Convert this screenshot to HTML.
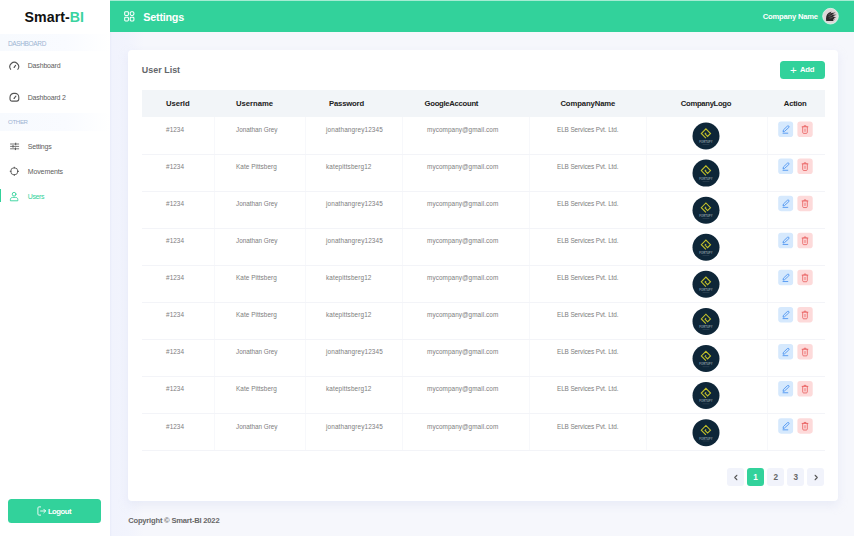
<!DOCTYPE html><html lang="en"><head><meta charset="utf-8"><title>Smart-BI Users</title><style>
*{margin:0;padding:0;box-sizing:border-box}
html,body{width:854px;height:539px;overflow:hidden;background:#fff}
body{position:relative;font-family:"Liberation Sans",sans-serif;color:#666}
.abs{position:absolute}
.t{position:absolute;white-space:nowrap;line-height:1}
#side{left:0;top:0;width:110px;height:539px;background:#fff}
.band{left:0;width:110px;background:linear-gradient(90deg,#f7fafe 0%,#f9fbff 60%,#ffffff 100%)}
#main{left:110px;top:0;width:744px;height:535.6px;background:linear-gradient(90deg,#e9ecfa 0,#f1f3fd 2px,#f2f4fd 18px,#f6f7fc 34px)}
#hdr{left:110px;top:0;width:744px;height:31.6px;background:#32d29b;border-top:1px solid #a6ecd3}
#card{left:128px;top:50.3px;width:710.3px;height:451px;background:#fff;border-radius:4px;box-shadow:0 4px 10px rgba(205,212,238,.35)}
#thead{left:141.5px;top:90px;width:683px;height:27px;background:#f2f5f8}
.hl{left:141.5px;width:683px;height:1px;background:#f3f4f8}
.vl{top:117px;width:1px;height:334px;background:#f7f8fb}
.logo{width:27.2px;height:27.2px;border-radius:50%;background:#0e2638;left:692.4px}
.eb{width:15px;height:15.5px;border-radius:3px;background:#d6e9fd;left:778.1px}
.db{width:15.4px;height:15.5px;border-radius:3px;background:#fddada;left:797.3px}
.pg{top:468.1px;width:17px;height:17.5px;border-radius:3px;background:#f1f3fb}
</style></head><body>
<div id="main" class="abs"></div>
<div id="hdr" class="abs"></div>
<div id="side" class="abs"></div>
<div class="abs band" style="top:33.7px;height:17.3px"></div>
<div class="abs band" style="top:112.5px;height:18.5px"></div>
<div class="t" style="left:24.60px;top:10.08px;font-size:14.2px;color:#111;font-weight:bold;letter-spacing:0.028px;">Smart-<span style="color:#3ad3a0">BI</span></div>
<div class="t" style="left:7.90px;top:40.90px;font-size:6.5px;color:#9db4d2;letter-spacing:-0.342px;">DASHBOARD</div>
<div class="t" style="left:8.10px;top:119.24px;font-size:6.1px;color:#9db4d2;letter-spacing:-0.350px;">OTHER</div>
<div class="t" style="left:27.70px;top:62.37px;font-size:7.0px;color:#5c5c5c;letter-spacing:-0.161px;">Dashboard</div>
<div class="t" style="left:27.70px;top:94.17px;font-size:7.0px;color:#5c5c5c;letter-spacing:-0.189px;">Dashboard 2</div>
<div class="t" style="left:27.70px;top:143.27px;font-size:7.0px;color:#5c5c5c;letter-spacing:-0.187px;">Settings</div>
<div class="t" style="left:27.70px;top:168.37px;font-size:7.0px;color:#5c5c5c;letter-spacing:-0.098px;">Movements</div>
<div class="t" style="left:27.70px;top:193.27px;font-size:7.0px;color:#32d29b;letter-spacing:-0.356px;">Users</div>
<div class="abs" style="left:0;top:189.2px;width:1.1px;height:12.6px;background:#32d29b"></div>
<svg class="abs" style="left:9px;top:60.5px" width="11" height="11" viewBox="0 0 11 11" fill="none" stroke="#555" stroke-width="1.1" stroke-linecap="round"><path d="M1.65 8.3A4.4 4.4 0 1 1 8.85 8.3"/><path d="M5.3 6.1L6.6 4.4"/><circle cx="5.15" cy="6.3" r="0.6" fill="#555" stroke="none"/></svg>
<svg class="abs" style="left:9px;top:91.5px" width="11" height="11" viewBox="0 0 11 11" fill="none" stroke="#555" stroke-width="1.1" stroke-linecap="round"><path d="M3 9.1H7.8A2 2 0 0 0 9.8 7.1V5.2A3.8 3.8 0 0 0 6 1.4H4.8A3.8 3.8 0 0 0 1 5.2V7.1A2 2 0 0 0 3 9.1Z"/><path d="M5.3 6.2L6.9 4.1"/><circle cx="5.15" cy="6.4" r="0.6" fill="#555" stroke="none"/></svg>
<svg class="abs" style="left:9px;top:141px" width="11" height="11" viewBox="0 0 11 11" fill="none" stroke="#555" stroke-width="0.8" stroke-linecap="round"><path d="M1.5 3H9.7M1.5 5.4H9.7M1.5 7.8H9.7"/><path d="M6.7 2.1V3.9M4 4.5V6.3M6.4 6.9V8.7" stroke-width="1"/></svg>
<svg class="abs" style="left:9px;top:166px" width="11" height="11" viewBox="0 0 11 11" fill="none" stroke="#555" stroke-width="0.85" stroke-linecap="round"><circle cx="5.3" cy="5.3" r="3.6"/><path d="M5.3 1.2V2.2M5.3 8.4V9.4M1.2 5.3H2.2M8.4 5.3H9.4" stroke-width="1"/></svg>
<svg class="abs" style="left:9px;top:191px" width="11" height="11" viewBox="0 0 11 11" fill="none" stroke="#32d29b" stroke-width="0.9" stroke-linecap="round" stroke-linejoin="round"><circle cx="5.1" cy="3.2" r="1.85"/><path d="M1.4 9.4V8.5C1.4 7.2 2.4 6.4 3.6 6.4H6.6C7.8 6.4 8.8 7.2 8.8 8.5V9.4Z"/></svg>
<div class="abs" style="left:7.5px;top:498.8px;width:93.7px;height:24.2px;border-radius:3.5px;background:#32d29b"></div>
<div class="t" style="left:47.90px;top:507.68px;font-size:7.7px;color:#fff;font-weight:bold;letter-spacing:-0.480px;">Logout</div>
<svg class="abs" style="left:36.5px;top:506px" width="10" height="10" viewBox="0 0 10 10" fill="none" stroke="#fff" stroke-width="0.9" stroke-linecap="round" stroke-linejoin="round"><path d="M3.6 0.9H1.9C1.3 0.9 0.9 1.3 0.9 1.9V8.1C0.9 8.7 1.3 9.1 1.9 9.1H3.6"/><path d="M3.6 5H8.6M6.8 3.2L8.6 5L6.8 6.8"/></svg>
<svg class="abs" style="left:123.5px;top:11px" width="11" height="11" viewBox="0 0 11 11" fill="none" stroke="#fff" stroke-width="1.05"><rect x="0.7" y="0.7" width="3.7" height="3.7" rx="0.8"/><rect x="6.2" y="0.7" width="3.7" height="3.7" rx="1.3"/><rect x="0.7" y="6.2" width="3.7" height="3.7" rx="0.8"/><rect x="6.2" y="6.2" width="3.7" height="3.7" rx="0.8"/></svg>
<div class="t" style="left:143.30px;top:12.06px;font-size:10.8px;color:#fff;font-weight:bold;letter-spacing:-0.238px;">Settings</div>
<div class="t" style="left:762.80px;top:12.97px;font-size:7.6px;color:#fff;font-weight:bold;letter-spacing:-0.203px;">Company Name</div>
<svg class="abs" style="left:0;top:0" width="854" height="32" viewBox="0 0 854 32"><g transform="translate(821.9,7.6) scale(0.86)"><circle cx="10" cy="10" r="9.1" fill="#ddd6d8" stroke="#e6f8f0" stroke-width="0.9"/><path d="M5 15.6C4.4 12 5 8 8 6L11.2 4.4L10.2 6.3L16 5.6L11.6 8L17 8.4L12.6 10L16.6 11.4L13.6 12L15.2 13.6L12.8 13.7L13.6 15.6Z" fill="#2a2628"/><path d="M7.4 8.4L11 6.6M7.8 10.4L12 8.9M8.8 12.4L12.6 11.3" stroke="#8d8789" stroke-width="0.6" fill="none"/></g></svg>
<div id="card" class="abs"></div>
<div class="t" style="left:141.80px;top:66.17px;font-size:8.9px;color:#63666b;font-weight:bold;letter-spacing:0.035px;">User List</div>
<div class="abs" style="left:780.1px;top:61px;width:44.6px;height:17.6px;border-radius:3.5px;background:#32d29b"></div>
<div class="t" style="left:789.90px;top:64.77px;font-size:11.5px;color:#fff;">+</div>
<div class="t" style="left:800.10px;top:66.48px;font-size:7.7px;color:#fff;font-weight:bold;letter-spacing:-0.289px;">Add</div>
<div id="thead" class="abs"></div>
<div class="t" style="left:166.00px;top:99.88px;font-size:7.7px;color:#222;font-weight:bold;letter-spacing:-0.061px;">UserId</div>
<div class="t" style="left:236.00px;top:99.88px;font-size:7.7px;color:#222;font-weight:bold;letter-spacing:-0.030px;">Username</div>
<div class="t" style="left:329.00px;top:99.88px;font-size:7.7px;color:#222;font-weight:bold;letter-spacing:-0.172px;">Password</div>
<div class="t" style="left:424.60px;top:99.88px;font-size:7.7px;color:#222;font-weight:bold;letter-spacing:-0.286px;">GoogleAccount</div>
<div class="t" style="left:560.40px;top:99.88px;font-size:7.7px;color:#222;font-weight:bold;letter-spacing:-0.105px;">CompanyName</div>
<div class="t" style="left:680.80px;top:99.88px;font-size:7.7px;color:#222;font-weight:bold;letter-spacing:-0.318px;">CompanyLogo</div>
<div class="t" style="left:783.80px;top:99.88px;font-size:7.7px;color:#222;font-weight:bold;letter-spacing:-0.209px;">Action</div>
<div class="abs vl" style="left:214.3px"></div>
<div class="abs vl" style="left:305px"></div>
<div class="abs vl" style="left:402px"></div>
<div class="abs vl" style="left:529px"></div>
<div class="abs vl" style="left:646.2px"></div>
<div class="abs vl" style="left:766.5px"></div>
<div class="abs hl" style="top:153.5px"></div>
<div class="t" style="left:166.10px;top:126.88px;font-size:6.4px;color:#7e7e7e;letter-spacing:0.021px;">#1234</div>
<div class="t" style="left:236.00px;top:126.88px;font-size:6.4px;color:#7e7e7e;letter-spacing:-0.037px;">Jonathan Grey</div>
<div class="t" style="left:326.00px;top:126.88px;font-size:6.4px;color:#7e7e7e;letter-spacing:0.129px;">jonathangrey12345</div>
<div class="t" style="left:427.00px;top:126.88px;font-size:6.4px;color:#7e7e7e;letter-spacing:0.065px;">mycompany@gmail.com</div>
<div class="t" style="left:557.00px;top:126.88px;font-size:6.4px;color:#7e7e7e;letter-spacing:-0.099px;">ELB Services Pvt. Ltd.</div>
<div class="abs hl" style="top:190.6px"></div>
<div class="t" style="left:166.10px;top:163.96px;font-size:6.4px;color:#7e7e7e;letter-spacing:0.021px;">#1234</div>
<div class="t" style="left:236.00px;top:163.96px;font-size:6.4px;color:#7e7e7e;letter-spacing:0.043px;">Kate Pittsberg</div>
<div class="t" style="left:326.00px;top:163.96px;font-size:6.4px;color:#7e7e7e;letter-spacing:0.122px;">katepittsberg12</div>
<div class="t" style="left:427.00px;top:163.96px;font-size:6.4px;color:#7e7e7e;letter-spacing:0.065px;">mycompany@gmail.com</div>
<div class="t" style="left:557.00px;top:163.96px;font-size:6.4px;color:#7e7e7e;letter-spacing:-0.099px;">ELB Services Pvt. Ltd.</div>
<div class="abs hl" style="top:227.6px"></div>
<div class="t" style="left:166.10px;top:201.04px;font-size:6.4px;color:#7e7e7e;letter-spacing:0.021px;">#1234</div>
<div class="t" style="left:236.00px;top:201.04px;font-size:6.4px;color:#7e7e7e;letter-spacing:-0.037px;">Jonathan Grey</div>
<div class="t" style="left:326.00px;top:201.04px;font-size:6.4px;color:#7e7e7e;letter-spacing:0.129px;">jonathangrey12345</div>
<div class="t" style="left:427.00px;top:201.04px;font-size:6.4px;color:#7e7e7e;letter-spacing:0.065px;">mycompany@gmail.com</div>
<div class="t" style="left:557.00px;top:201.04px;font-size:6.4px;color:#7e7e7e;letter-spacing:-0.099px;">ELB Services Pvt. Ltd.</div>
<div class="abs hl" style="top:264.7px"></div>
<div class="t" style="left:166.10px;top:238.12px;font-size:6.4px;color:#7e7e7e;letter-spacing:0.021px;">#1234</div>
<div class="t" style="left:236.00px;top:238.12px;font-size:6.4px;color:#7e7e7e;letter-spacing:-0.037px;">Jonathan Grey</div>
<div class="t" style="left:326.00px;top:238.12px;font-size:6.4px;color:#7e7e7e;letter-spacing:0.129px;">jonathangrey12345</div>
<div class="t" style="left:427.00px;top:238.12px;font-size:6.4px;color:#7e7e7e;letter-spacing:0.065px;">mycompany@gmail.com</div>
<div class="t" style="left:557.00px;top:238.12px;font-size:6.4px;color:#7e7e7e;letter-spacing:-0.099px;">ELB Services Pvt. Ltd.</div>
<div class="abs hl" style="top:301.8px"></div>
<div class="t" style="left:166.10px;top:275.20px;font-size:6.4px;color:#7e7e7e;letter-spacing:0.021px;">#1234</div>
<div class="t" style="left:236.00px;top:275.20px;font-size:6.4px;color:#7e7e7e;letter-spacing:0.043px;">Kate Pittsberg</div>
<div class="t" style="left:326.00px;top:275.20px;font-size:6.4px;color:#7e7e7e;letter-spacing:0.122px;">katepittsberg12</div>
<div class="t" style="left:427.00px;top:275.20px;font-size:6.4px;color:#7e7e7e;letter-spacing:0.065px;">mycompany@gmail.com</div>
<div class="t" style="left:557.00px;top:275.20px;font-size:6.4px;color:#7e7e7e;letter-spacing:-0.099px;">ELB Services Pvt. Ltd.</div>
<div class="abs hl" style="top:338.9px"></div>
<div class="t" style="left:166.10px;top:312.28px;font-size:6.4px;color:#7e7e7e;letter-spacing:0.021px;">#1234</div>
<div class="t" style="left:236.00px;top:312.28px;font-size:6.4px;color:#7e7e7e;letter-spacing:0.043px;">Kate Pittsberg</div>
<div class="t" style="left:326.00px;top:312.28px;font-size:6.4px;color:#7e7e7e;letter-spacing:0.122px;">katepittsberg12</div>
<div class="t" style="left:427.00px;top:312.28px;font-size:6.4px;color:#7e7e7e;letter-spacing:0.065px;">mycompany@gmail.com</div>
<div class="t" style="left:557.00px;top:312.28px;font-size:6.4px;color:#7e7e7e;letter-spacing:-0.099px;">ELB Services Pvt. Ltd.</div>
<div class="abs hl" style="top:375.9px"></div>
<div class="t" style="left:166.10px;top:349.36px;font-size:6.4px;color:#7e7e7e;letter-spacing:0.021px;">#1234</div>
<div class="t" style="left:236.00px;top:349.36px;font-size:6.4px;color:#7e7e7e;letter-spacing:-0.037px;">Jonathan Grey</div>
<div class="t" style="left:326.00px;top:349.36px;font-size:6.4px;color:#7e7e7e;letter-spacing:0.129px;">jonathangrey12345</div>
<div class="t" style="left:427.00px;top:349.36px;font-size:6.4px;color:#7e7e7e;letter-spacing:0.065px;">mycompany@gmail.com</div>
<div class="t" style="left:557.00px;top:349.36px;font-size:6.4px;color:#7e7e7e;letter-spacing:-0.099px;">ELB Services Pvt. Ltd.</div>
<div class="abs hl" style="top:413.0px"></div>
<div class="t" style="left:166.10px;top:386.44px;font-size:6.4px;color:#7e7e7e;letter-spacing:0.021px;">#1234</div>
<div class="t" style="left:236.00px;top:386.44px;font-size:6.4px;color:#7e7e7e;letter-spacing:0.043px;">Kate Pittsberg</div>
<div class="t" style="left:326.00px;top:386.44px;font-size:6.4px;color:#7e7e7e;letter-spacing:0.122px;">katepittsberg12</div>
<div class="t" style="left:427.00px;top:386.44px;font-size:6.4px;color:#7e7e7e;letter-spacing:0.065px;">mycompany@gmail.com</div>
<div class="t" style="left:557.00px;top:386.44px;font-size:6.4px;color:#7e7e7e;letter-spacing:-0.099px;">ELB Services Pvt. Ltd.</div>
<div class="abs hl" style="top:450.1px"></div>
<div class="t" style="left:166.10px;top:423.52px;font-size:6.4px;color:#7e7e7e;letter-spacing:0.021px;">#1234</div>
<div class="t" style="left:236.00px;top:423.52px;font-size:6.4px;color:#7e7e7e;letter-spacing:-0.037px;">Jonathan Grey</div>
<div class="t" style="left:326.00px;top:423.52px;font-size:6.4px;color:#7e7e7e;letter-spacing:0.129px;">jonathangrey12345</div>
<div class="t" style="left:427.00px;top:423.52px;font-size:6.4px;color:#7e7e7e;letter-spacing:0.065px;">mycompany@gmail.com</div>
<div class="t" style="left:557.00px;top:423.52px;font-size:6.4px;color:#7e7e7e;letter-spacing:-0.099px;">ELB Services Pvt. Ltd.</div>
<svg class="abs" style="left:0;top:0" width="854" height="539" viewBox="0 0 854 539"><g transform="translate(692.40,122.40)"><circle cx="13.6" cy="13.6" r="13.5" fill="#0e2638"/><path d="M13.5 15.8L8.9 11.1L13.5 6.4L18.1 11.1L15.2 14L12.7 11.4L13.7 10.4" stroke="#c3c02a" stroke-width="1.1" fill="none"/><rect x="10.2" y="21.7" width="6.8" height="0.5" fill="#3d4f5e"/><text x="13.6" y="20.5" font-size="2.6" font-family="Liberation Sans, sans-serif" fill="#8f9da6" text-anchor="middle" font-weight="bold" letter-spacing="0.15">FORTUFY</text></g><g transform="translate(778.2,121.50)" fill="none" stroke="#3f8cf0" stroke-width="0.8" stroke-linecap="round" stroke-linejoin="round"><rect width="14.9" height="15.5" rx="2.8" fill="#d6e9fd" stroke="none"/><path d="M4.9 9.9L5.2 8.4L9.2 4.6C9.6 4.2 10.2 4.2 10.6 4.6C11 5 11 5.6 10.6 6L6.5 9.7Z"/><path d="M4.8 11.7H9.6"/></g><g transform="translate(797.4,121.50)" fill="none" stroke="#e95b5b" stroke-width="0.8" stroke-linecap="round" stroke-linejoin="round"><rect width="15.3" height="15.5" rx="2.8" fill="#fddada" stroke="none"/><path d="M4.7 5.3H10.5M6.6 5.1V4.3H8.6V5.1"/><path d="M5.3 5.5V10.9C5.3 11.5 5.7 11.9 6.3 11.9H8.9C9.5 11.9 9.9 11.5 9.9 10.9V5.5"/><path d="M7.6 7.5V9.9"/></g><g transform="translate(692.40,159.48)"><circle cx="13.6" cy="13.6" r="13.5" fill="#0e2638"/><path d="M13.5 15.8L8.9 11.1L13.5 6.4L18.1 11.1L15.2 14L12.7 11.4L13.7 10.4" stroke="#c3c02a" stroke-width="1.1" fill="none"/><rect x="10.2" y="21.7" width="6.8" height="0.5" fill="#3d4f5e"/><text x="13.6" y="20.5" font-size="2.6" font-family="Liberation Sans, sans-serif" fill="#8f9da6" text-anchor="middle" font-weight="bold" letter-spacing="0.15">FORTUFY</text></g><g transform="translate(778.2,158.58)" fill="none" stroke="#3f8cf0" stroke-width="0.8" stroke-linecap="round" stroke-linejoin="round"><rect width="14.9" height="15.5" rx="2.8" fill="#d6e9fd" stroke="none"/><path d="M4.9 9.9L5.2 8.4L9.2 4.6C9.6 4.2 10.2 4.2 10.6 4.6C11 5 11 5.6 10.6 6L6.5 9.7Z"/><path d="M4.8 11.7H9.6"/></g><g transform="translate(797.4,158.58)" fill="none" stroke="#e95b5b" stroke-width="0.8" stroke-linecap="round" stroke-linejoin="round"><rect width="15.3" height="15.5" rx="2.8" fill="#fddada" stroke="none"/><path d="M4.7 5.3H10.5M6.6 5.1V4.3H8.6V5.1"/><path d="M5.3 5.5V10.9C5.3 11.5 5.7 11.9 6.3 11.9H8.9C9.5 11.9 9.9 11.5 9.9 10.9V5.5"/><path d="M7.6 7.5V9.9"/></g><g transform="translate(692.40,196.56)"><circle cx="13.6" cy="13.6" r="13.5" fill="#0e2638"/><path d="M13.5 15.8L8.9 11.1L13.5 6.4L18.1 11.1L15.2 14L12.7 11.4L13.7 10.4" stroke="#c3c02a" stroke-width="1.1" fill="none"/><rect x="10.2" y="21.7" width="6.8" height="0.5" fill="#3d4f5e"/><text x="13.6" y="20.5" font-size="2.6" font-family="Liberation Sans, sans-serif" fill="#8f9da6" text-anchor="middle" font-weight="bold" letter-spacing="0.15">FORTUFY</text></g><g transform="translate(778.2,195.66)" fill="none" stroke="#3f8cf0" stroke-width="0.8" stroke-linecap="round" stroke-linejoin="round"><rect width="14.9" height="15.5" rx="2.8" fill="#d6e9fd" stroke="none"/><path d="M4.9 9.9L5.2 8.4L9.2 4.6C9.6 4.2 10.2 4.2 10.6 4.6C11 5 11 5.6 10.6 6L6.5 9.7Z"/><path d="M4.8 11.7H9.6"/></g><g transform="translate(797.4,195.66)" fill="none" stroke="#e95b5b" stroke-width="0.8" stroke-linecap="round" stroke-linejoin="round"><rect width="15.3" height="15.5" rx="2.8" fill="#fddada" stroke="none"/><path d="M4.7 5.3H10.5M6.6 5.1V4.3H8.6V5.1"/><path d="M5.3 5.5V10.9C5.3 11.5 5.7 11.9 6.3 11.9H8.9C9.5 11.9 9.9 11.5 9.9 10.9V5.5"/><path d="M7.6 7.5V9.9"/></g><g transform="translate(692.40,233.64)"><circle cx="13.6" cy="13.6" r="13.5" fill="#0e2638"/><path d="M13.5 15.8L8.9 11.1L13.5 6.4L18.1 11.1L15.2 14L12.7 11.4L13.7 10.4" stroke="#c3c02a" stroke-width="1.1" fill="none"/><rect x="10.2" y="21.7" width="6.8" height="0.5" fill="#3d4f5e"/><text x="13.6" y="20.5" font-size="2.6" font-family="Liberation Sans, sans-serif" fill="#8f9da6" text-anchor="middle" font-weight="bold" letter-spacing="0.15">FORTUFY</text></g><g transform="translate(778.2,232.74)" fill="none" stroke="#3f8cf0" stroke-width="0.8" stroke-linecap="round" stroke-linejoin="round"><rect width="14.9" height="15.5" rx="2.8" fill="#d6e9fd" stroke="none"/><path d="M4.9 9.9L5.2 8.4L9.2 4.6C9.6 4.2 10.2 4.2 10.6 4.6C11 5 11 5.6 10.6 6L6.5 9.7Z"/><path d="M4.8 11.7H9.6"/></g><g transform="translate(797.4,232.74)" fill="none" stroke="#e95b5b" stroke-width="0.8" stroke-linecap="round" stroke-linejoin="round"><rect width="15.3" height="15.5" rx="2.8" fill="#fddada" stroke="none"/><path d="M4.7 5.3H10.5M6.6 5.1V4.3H8.6V5.1"/><path d="M5.3 5.5V10.9C5.3 11.5 5.7 11.9 6.3 11.9H8.9C9.5 11.9 9.9 11.5 9.9 10.9V5.5"/><path d="M7.6 7.5V9.9"/></g><g transform="translate(692.40,270.72)"><circle cx="13.6" cy="13.6" r="13.5" fill="#0e2638"/><path d="M13.5 15.8L8.9 11.1L13.5 6.4L18.1 11.1L15.2 14L12.7 11.4L13.7 10.4" stroke="#c3c02a" stroke-width="1.1" fill="none"/><rect x="10.2" y="21.7" width="6.8" height="0.5" fill="#3d4f5e"/><text x="13.6" y="20.5" font-size="2.6" font-family="Liberation Sans, sans-serif" fill="#8f9da6" text-anchor="middle" font-weight="bold" letter-spacing="0.15">FORTUFY</text></g><g transform="translate(778.2,269.82)" fill="none" stroke="#3f8cf0" stroke-width="0.8" stroke-linecap="round" stroke-linejoin="round"><rect width="14.9" height="15.5" rx="2.8" fill="#d6e9fd" stroke="none"/><path d="M4.9 9.9L5.2 8.4L9.2 4.6C9.6 4.2 10.2 4.2 10.6 4.6C11 5 11 5.6 10.6 6L6.5 9.7Z"/><path d="M4.8 11.7H9.6"/></g><g transform="translate(797.4,269.82)" fill="none" stroke="#e95b5b" stroke-width="0.8" stroke-linecap="round" stroke-linejoin="round"><rect width="15.3" height="15.5" rx="2.8" fill="#fddada" stroke="none"/><path d="M4.7 5.3H10.5M6.6 5.1V4.3H8.6V5.1"/><path d="M5.3 5.5V10.9C5.3 11.5 5.7 11.9 6.3 11.9H8.9C9.5 11.9 9.9 11.5 9.9 10.9V5.5"/><path d="M7.6 7.5V9.9"/></g><g transform="translate(692.40,307.80)"><circle cx="13.6" cy="13.6" r="13.5" fill="#0e2638"/><path d="M13.5 15.8L8.9 11.1L13.5 6.4L18.1 11.1L15.2 14L12.7 11.4L13.7 10.4" stroke="#c3c02a" stroke-width="1.1" fill="none"/><rect x="10.2" y="21.7" width="6.8" height="0.5" fill="#3d4f5e"/><text x="13.6" y="20.5" font-size="2.6" font-family="Liberation Sans, sans-serif" fill="#8f9da6" text-anchor="middle" font-weight="bold" letter-spacing="0.15">FORTUFY</text></g><g transform="translate(778.2,306.90)" fill="none" stroke="#3f8cf0" stroke-width="0.8" stroke-linecap="round" stroke-linejoin="round"><rect width="14.9" height="15.5" rx="2.8" fill="#d6e9fd" stroke="none"/><path d="M4.9 9.9L5.2 8.4L9.2 4.6C9.6 4.2 10.2 4.2 10.6 4.6C11 5 11 5.6 10.6 6L6.5 9.7Z"/><path d="M4.8 11.7H9.6"/></g><g transform="translate(797.4,306.90)" fill="none" stroke="#e95b5b" stroke-width="0.8" stroke-linecap="round" stroke-linejoin="round"><rect width="15.3" height="15.5" rx="2.8" fill="#fddada" stroke="none"/><path d="M4.7 5.3H10.5M6.6 5.1V4.3H8.6V5.1"/><path d="M5.3 5.5V10.9C5.3 11.5 5.7 11.9 6.3 11.9H8.9C9.5 11.9 9.9 11.5 9.9 10.9V5.5"/><path d="M7.6 7.5V9.9"/></g><g transform="translate(692.40,344.88)"><circle cx="13.6" cy="13.6" r="13.5" fill="#0e2638"/><path d="M13.5 15.8L8.9 11.1L13.5 6.4L18.1 11.1L15.2 14L12.7 11.4L13.7 10.4" stroke="#c3c02a" stroke-width="1.1" fill="none"/><rect x="10.2" y="21.7" width="6.8" height="0.5" fill="#3d4f5e"/><text x="13.6" y="20.5" font-size="2.6" font-family="Liberation Sans, sans-serif" fill="#8f9da6" text-anchor="middle" font-weight="bold" letter-spacing="0.15">FORTUFY</text></g><g transform="translate(778.2,343.98)" fill="none" stroke="#3f8cf0" stroke-width="0.8" stroke-linecap="round" stroke-linejoin="round"><rect width="14.9" height="15.5" rx="2.8" fill="#d6e9fd" stroke="none"/><path d="M4.9 9.9L5.2 8.4L9.2 4.6C9.6 4.2 10.2 4.2 10.6 4.6C11 5 11 5.6 10.6 6L6.5 9.7Z"/><path d="M4.8 11.7H9.6"/></g><g transform="translate(797.4,343.98)" fill="none" stroke="#e95b5b" stroke-width="0.8" stroke-linecap="round" stroke-linejoin="round"><rect width="15.3" height="15.5" rx="2.8" fill="#fddada" stroke="none"/><path d="M4.7 5.3H10.5M6.6 5.1V4.3H8.6V5.1"/><path d="M5.3 5.5V10.9C5.3 11.5 5.7 11.9 6.3 11.9H8.9C9.5 11.9 9.9 11.5 9.9 10.9V5.5"/><path d="M7.6 7.5V9.9"/></g><g transform="translate(692.40,381.96)"><circle cx="13.6" cy="13.6" r="13.5" fill="#0e2638"/><path d="M13.5 15.8L8.9 11.1L13.5 6.4L18.1 11.1L15.2 14L12.7 11.4L13.7 10.4" stroke="#c3c02a" stroke-width="1.1" fill="none"/><rect x="10.2" y="21.7" width="6.8" height="0.5" fill="#3d4f5e"/><text x="13.6" y="20.5" font-size="2.6" font-family="Liberation Sans, sans-serif" fill="#8f9da6" text-anchor="middle" font-weight="bold" letter-spacing="0.15">FORTUFY</text></g><g transform="translate(778.2,381.06)" fill="none" stroke="#3f8cf0" stroke-width="0.8" stroke-linecap="round" stroke-linejoin="round"><rect width="14.9" height="15.5" rx="2.8" fill="#d6e9fd" stroke="none"/><path d="M4.9 9.9L5.2 8.4L9.2 4.6C9.6 4.2 10.2 4.2 10.6 4.6C11 5 11 5.6 10.6 6L6.5 9.7Z"/><path d="M4.8 11.7H9.6"/></g><g transform="translate(797.4,381.06)" fill="none" stroke="#e95b5b" stroke-width="0.8" stroke-linecap="round" stroke-linejoin="round"><rect width="15.3" height="15.5" rx="2.8" fill="#fddada" stroke="none"/><path d="M4.7 5.3H10.5M6.6 5.1V4.3H8.6V5.1"/><path d="M5.3 5.5V10.9C5.3 11.5 5.7 11.9 6.3 11.9H8.9C9.5 11.9 9.9 11.5 9.9 10.9V5.5"/><path d="M7.6 7.5V9.9"/></g><g transform="translate(692.40,419.04)"><circle cx="13.6" cy="13.6" r="13.5" fill="#0e2638"/><path d="M13.5 15.8L8.9 11.1L13.5 6.4L18.1 11.1L15.2 14L12.7 11.4L13.7 10.4" stroke="#c3c02a" stroke-width="1.1" fill="none"/><rect x="10.2" y="21.7" width="6.8" height="0.5" fill="#3d4f5e"/><text x="13.6" y="20.5" font-size="2.6" font-family="Liberation Sans, sans-serif" fill="#8f9da6" text-anchor="middle" font-weight="bold" letter-spacing="0.15">FORTUFY</text></g><g transform="translate(778.2,418.14)" fill="none" stroke="#3f8cf0" stroke-width="0.8" stroke-linecap="round" stroke-linejoin="round"><rect width="14.9" height="15.5" rx="2.8" fill="#d6e9fd" stroke="none"/><path d="M4.9 9.9L5.2 8.4L9.2 4.6C9.6 4.2 10.2 4.2 10.6 4.6C11 5 11 5.6 10.6 6L6.5 9.7Z"/><path d="M4.8 11.7H9.6"/></g><g transform="translate(797.4,418.14)" fill="none" stroke="#e95b5b" stroke-width="0.8" stroke-linecap="round" stroke-linejoin="round"><rect width="15.3" height="15.5" rx="2.8" fill="#fddada" stroke="none"/><path d="M4.7 5.3H10.5M6.6 5.1V4.3H8.6V5.1"/><path d="M5.3 5.5V10.9C5.3 11.5 5.7 11.9 6.3 11.9H8.9C9.5 11.9 9.9 11.5 9.9 10.9V5.5"/><path d="M7.6 7.5V9.9"/></g></svg>
<div class="abs pg" style="left:727.0px;"></div>
<div class="abs pg" style="left:747.0px;background:#32d29b"></div>
<div class="abs pg" style="left:767.4px;"></div>
<div class="abs pg" style="left:787.2px;"></div>
<div class="abs pg" style="left:807.2px;"></div>
<div class="t" style="left:753.32px;top:474.26px;font-size:8.2px;color:#fff;font-weight:bold;">1</div>
<div class="t" style="left:773.62px;top:474.26px;font-size:8.2px;color:#666;font-weight:bold;">2</div>
<div class="t" style="left:793.52px;top:474.26px;font-size:8.2px;color:#666;font-weight:bold;">3</div>
<svg class="abs" style="left:732.5px;top:473.5px" width="6" height="7" viewBox="0 0 6 7" fill="none" stroke="#555" stroke-width="1.25" stroke-linecap="round" stroke-linejoin="round"><path d="M3.8 1.3L1.8 3.5L3.8 5.7"/></svg>
<svg class="abs" style="left:813px;top:473.5px" width="6" height="7" viewBox="0 0 6 7" fill="none" stroke="#555" stroke-width="1.25" stroke-linecap="round" stroke-linejoin="round"><path d="M2.2 1.3L4.2 3.5L2.2 5.7"/></svg>
<div class="t" style="left:128.20px;top:517.07px;font-size:7.6px;color:#686868;font-weight:bold;letter-spacing:-0.204px;">Copyright © Smart-BI 2022</div>
</body></html>
